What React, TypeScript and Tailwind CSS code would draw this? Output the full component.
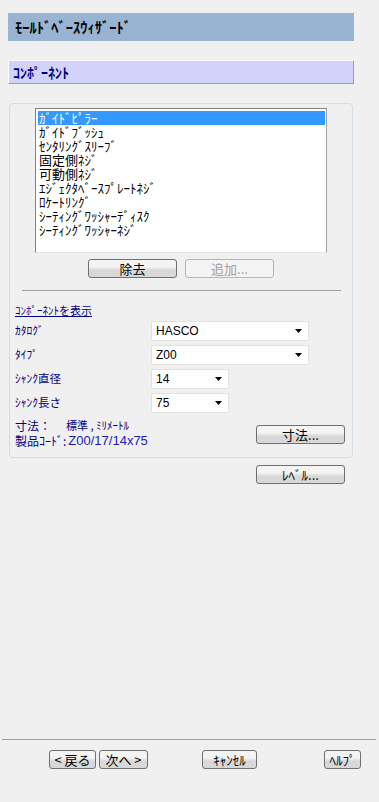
import React from "react";

const F = { fontFamily: '"Noto Sans CJK JP", "Liberation Sans", sans-serif' };

function Btn({ children, w, disabled }: { children: React.ReactNode; w: string; disabled?: boolean }) {
  return (
    <div
      className={
        "flex h-[19px] items-center justify-center rounded-[3px] border text-[13px] leading-none " +
        w +
        (disabled
          ? " border-[#b5b5b5] bg-[#f4f4f4] text-[#a0a0a0]"
          : " border-[#707070] bg-gradient-to-b from-[#f4f4f4] from-40% to-[#d8d8d8] to-60% text-black")
      }
    >
      {children}
    </div>
  );
}

function Combo({ value, w }: { value: string; w: string }) {
  return (
    <div className={"flex h-[20px] items-center justify-between rounded-[2px] border border-[#e2e2e2] bg-white pl-[4px] pr-[6px] " + w}>
      <span className="text-[12px] leading-none text-black" style={{ fontFamily: '"Liberation Sans", sans-serif' }}>{value}</span>
      <svg width="7" height="4" viewBox="0 0 7 4"><path d="M0 0h7L3.5 4z" fill="#000" /></svg>
    </div>
  );
}

const items = [
  "ｶﾞｲﾄﾞﾋﾟﾗｰ",
  "ｶﾞｲﾄﾞﾌﾞｯｼｭ",
  "ｾﾝﾀﾘﾝｸﾞｽﾘｰﾌﾞ",
  "固定側ﾈｼﾞ",
  "可動側ﾈｼﾞ",
  "ｴｼﾞｪｸﾀﾍﾞｰｽﾌﾟﾚｰﾄﾈｼﾞ",
  "ﾛｹｰﾄﾘﾝｸﾞ",
  "ｼｰﾃｨﾝｸﾞﾜｯｼｬｰﾃﾞｨｽｸ",
  "ｼｰﾃｨﾝｸﾞﾜｯｼｬｰﾈｼﾞ",
];

export default function App() {
  return (
    <div className="flex h-[802px] w-[379px] flex-col bg-[#f0f0f0]" style={F}>
      <div className="mx-[8px] mt-[13px] flex h-[28px] w-[346px] items-center bg-[#98b4d2] pl-[7px] text-[14.5px] font-bold leading-none text-black">
        ﾓｰﾙﾄﾞﾍﾞｰｽｳｨｻﾞｰﾄﾞ
      </div>
      <div className="mx-[8px] mt-[19px] flex h-[24px] w-[346px] items-center border-b border-l border-r border-t border-b-[#a0a0a0] border-l-white border-r-[#a0a0a0] border-t-white bg-[#d2d2fa] pl-[4px] text-[14px] font-bold leading-none text-[#000080]">
        ｺﾝﾎﾟｰﾈﾝﾄ
      </div>

      <div className="ml-[9px] mt-[19px] flex h-[355px] w-[344px] flex-col rounded-[4px] border border-[#d5dde6] bg-[#f0f0f0]">
        <div className="ml-[25px] mt-[4px] h-[145px] w-[292px] border border-[#828282] border-b-[#e4e4e4] border-r-[#a0a0a0] bg-white pl-[2px] pr-[1px] pt-[2px]">
          {items.map((t, i) => (
            <div
              key={t}
              className={
                "flex h-[14px] items-center pl-[1px] text-[13px] leading-[14px] " +
                (i === 0 ? "bg-[#3399ff] text-white" : "text-black")
              }
            >
              {t}
            </div>
          ))}
        </div>
        <div className="mt-[6px] flex gap-[8px] pl-[78px]">
          <Btn w="w-[89px]">除去</Btn>
          <Btn w="w-[89px]" disabled>追加...</Btn>
        </div>
        <div className="ml-[12px] mt-[12px] h-px w-[319px] bg-[#a0a0a0]" />
        <div className="ml-[5px] mt-[12px] h-[14px] text-[11px] leading-[14px] text-[#000080] underline">ｺﾝﾎﾟｰﾈﾝﾄを表示</div>

        <div className="mt-[4px] flex flex-col gap-[4px] pl-[5px]">
          {[
            ["ｶﾀﾛｸﾞ", "HASCO", "w-[158px]"],
            ["ﾀｲﾌﾟ", "Z00", "w-[158px]"],
            ["ｼｬﾝｸ直径", "14", "w-[78px]"],
            ["ｼｬﾝｸ長さ", "75", "w-[78px]"],
          ].map(([l, v, w]) => (
            <div key={l} className="flex items-center">
              <div className="w-[136px] text-[11.5px] leading-none text-[#000080]">{l}</div>
              <Combo value={v} w={w} />
            </div>
          ))}
        </div>

        <div className="mt-[5px] flex pl-[5px]">
          <div className="flex w-[241px] flex-col text-[12px] leading-[15px]">
            <div className="flex text-[#000080]">
              <span className="w-[51px]">寸法：</span>
              <span className="text-[11px]">標準 , ﾐﾘﾒｰﾄﾙ</span>
            </div>
            <div className="flex">
              <span className="text-[#000080]">製品ｺｰﾄﾞ:</span>
              <span className="ml-[2px] text-[13px] text-[#1c1cb0]" style={{ fontFamily: '"Liberation Sans", sans-serif' }}>Z00/17/14x75</span>
            </div>
          </div>
          <div className="mt-[7px]">
            <Btn w="w-[89px]">寸法...</Btn>
          </div>
        </div>
      </div>

      <div className="ml-[256px] mt-[7px]">
        <Btn w="w-[89px]">ﾚﾍﾞﾙ...</Btn>
      </div>

      <div className="flex-1" />

      <div className="mx-[2px] h-px w-[374px] bg-[#a0a0a0]" />
      <div className="mb-[33px] mt-[10px] flex">
        <div className="ml-[49px]">
          <Btn w="w-[47px]">&lt; 戻る</Btn>
        </div>
        <div className="ml-[3px]">
          <Btn w="w-[49px]">次へ &gt;</Btn>
        </div>
        <div className="ml-[54px]">
          <Btn w="w-[55px]">ｷｬﾝｾﾙ</Btn>
        </div>
        <div className="ml-[67px]">
          <Btn w="w-[37px]">ﾍﾙﾌﾟ</Btn>
        </div>
      </div>
    </div>
  );
}
